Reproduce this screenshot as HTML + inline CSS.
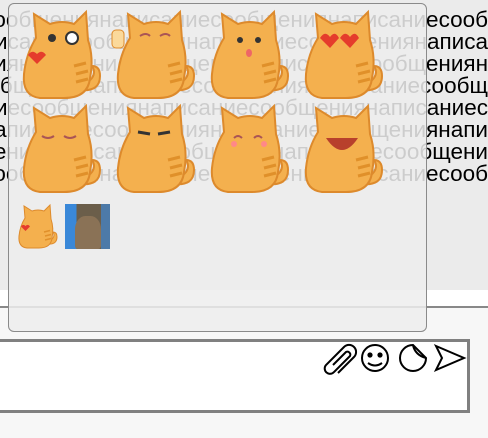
<!DOCTYPE html>
<html><head><meta charset="utf-8"><style>
html,body{margin:0;padding:0;width:488px;height:438px;overflow:hidden;background:#f7f7f7;font-family:"Liberation Sans",sans-serif}
#msgs{position:absolute;left:0;top:0;width:488px;height:290px;background:#ebebeb}
#white{position:absolute;left:0;top:290px;width:488px;height:16px;background:#fff}
#line{position:absolute;left:0;top:306px;width:488px;height:2px;background:#888}
.ln{position:absolute;left:0;width:488px;height:22px;overflow:hidden;display:flex;justify-content:flex-end;font-size:22.5px;line-height:22px;color:#000;white-space:nowrap}
#pop{position:absolute;left:8px;top:3px;width:417px;height:327px;border:1px solid #8a8a8a;border-radius:6px;background:rgba(238,238,238,0.86)}
#inp{position:absolute;left:-3px;top:339px;width:467px;height:68px;border:3px solid #808080;background:#fff}
svg.st{position:absolute}
</style></head><body>
<div id="msgs"></div><div id="white"></div><div id="line"></div>
<div class="ln" style="top:9px">написаниесообщениянаписаниесообщениянаписаниесооб</div>
<div class="ln" style="top:31px">написаниесообщениянаписаниесообщениянаписаниесообщениянаписа</div>
<div class="ln" style="top:53px">написаниесообщениянаписаниесообщениянаписаниесообщениян</div>
<div class="ln" style="top:75px">написаниесообщениянаписаниесообщениянаписаниесообщ</div>
<div class="ln" style="top:97px">написаниесообщениянаписаниесообщениянаписаниес</div>
<div class="ln" style="top:119px">написаниесообщениянаписаниесообщениянаписаниесообщениянапи</div>
<div class="ln" style="top:141px">написаниесообщениянаписаниесообщениянаписаниесообщени</div>
<div class="ln" style="top:163px">написаниесообщениянаписаниесообщениянаписаниесооб</div>
<div id="pop"></div>
<svg width="0" height="0" style="position:absolute"><defs>
<g id="cat">
<path d="M66 82 q20 2 20 -14 q0 -10 -8 -10 q4 6 0 12 q-4 6 -14 4 z" fill="#f4b04e" stroke="#dd8a2c" stroke-width="2"/>
<path d="M22 30 L20 6 L36 16 Q48 12 60 16 L72 4 L74 32 Q80 50 76 70 Q74 90 50 90 L26 90 Q8 88 10 66 Q12 46 22 30Z" fill="#f4b04e" stroke="#dd8a2c" stroke-width="2"/>
<path d="M60 58 l12 -3 M62 66 l12 -3 M62 74 l12 -3" stroke="#e0902a" stroke-width="3"/>
</g></defs></svg>
<svg class="st" style="left:14px;top:8px" width="88" height="92" viewBox="0 0 88 92"><use href="#cat"/><circle cx="38" cy="30" r="4" fill="#333"/><circle cx="58" cy="30" r="6" fill="#fff" stroke="#333" stroke-width="2"/><path d="M14 47 q4 -6 9 -1 q5 -5 9 1 l-9 9z" fill="#e53c2c"/></svg>
<svg class="st" style="left:108px;top:8px" width="88" height="92" viewBox="0 0 88 92"><use href="#cat"/><path d="M32 28 q6 -4 10 0 M52 28 q6 -4 10 0" stroke="#a55" stroke-width="2" fill="none"/><rect x="4" y="22" width="12" height="18" rx="4" fill="#fbd99b" stroke="#dd8a2c"/></svg>
<svg class="st" style="left:202px;top:8px" width="88" height="92" viewBox="0 0 88 92"><use href="#cat"/><circle cx="38" cy="32" r="3" fill="#333"/><circle cx="56" cy="32" r="3" fill="#333"/><ellipse cx="47" cy="45" rx="3" ry="4" fill="#e66"/></svg>
<svg class="st" style="left:296px;top:8px" width="88" height="92" viewBox="0 0 88 92"><use href="#cat"/><path d="M24 30 q5 -8 10 -1 q5 -7 9 1 l-9 10z M44 30 q5 -8 10 -1 q5 -7 9 1 l-9 10z" fill="#e53c2c"/></svg>
<svg class="st" style="left:14px;top:102px" width="88" height="92" viewBox="0 0 88 92"><use href="#cat"/><path d="M28 34 q6 4 12 0 M50 34 q6 4 12 0" stroke="#a55" stroke-width="2" fill="none"/></svg>
<svg class="st" style="left:108px;top:102px" width="88" height="92" viewBox="0 0 88 92"><use href="#cat"/><path d="M30 30 l12 2 M50 32 l12 -2" stroke="#333" stroke-width="3"/></svg>
<svg class="st" style="left:202px;top:102px" width="88" height="92" viewBox="0 0 88 92"><use href="#cat"/><path d="M32 36 q4 -4 8 0 M52 36 q4 -4 8 0" stroke="#a55" stroke-width="2" fill="none"/><circle cx="32" cy="42" r="3" fill="#f88"/><circle cx="62" cy="42" r="3" fill="#f88"/></svg>
<svg class="st" style="left:296px;top:102px" width="88" height="92" viewBox="0 0 88 92"><use href="#cat"/><path d="M30 36 q16 24 32 0 z" fill="#b8402c"/></svg>
<svg class="st" style="left:14px;top:203px" width="44" height="46" viewBox="0 0 88 92"><use href="#cat"/><path d="M14 47 q4 -6 9 -1 q5 -5 9 1 l-9 9z" fill="#e53c2c"/></svg>
<div style="position:absolute;left:65px;top:204px;width:45px;height:45px;background:linear-gradient(90deg,#3a88d8 0 25%,#6b5e4a 25% 80%,#4d7aa8 80%)"><div style="position:absolute;left:10px;top:12px;width:26px;height:33px;background:#8a7256;border-radius:40% 40% 10% 10%"></div></div>
<div id="inp"></div>
<svg style="position:absolute;left:320px;top:343px" width="148" height="32" viewBox="0 0 148 32" fill="none" stroke="#000" stroke-width="2">
<path d="M13 22 L26 9 a3 3 0 0 1 4 4 L14 29 a5 5 0 0 1 -8 -7 L24 4 a7 7 0 0 1 10 10 L18 30"/>
<circle cx="55" cy="15" r="13"/><circle cx="50" cy="12" r="1.6" fill="#000"/><circle cx="60" cy="12" r="1.6" fill="#000"/><path d="M48 20 q7 5 14 0"/>
<path d="M93 2 a13 13 0 1 0 13 13 z"/><path d="M93 2 q2 10 13 13"/>
<path d="M116 3 l28 12 l-28 12 l6 -12 z"/>
</svg>
</body></html>
